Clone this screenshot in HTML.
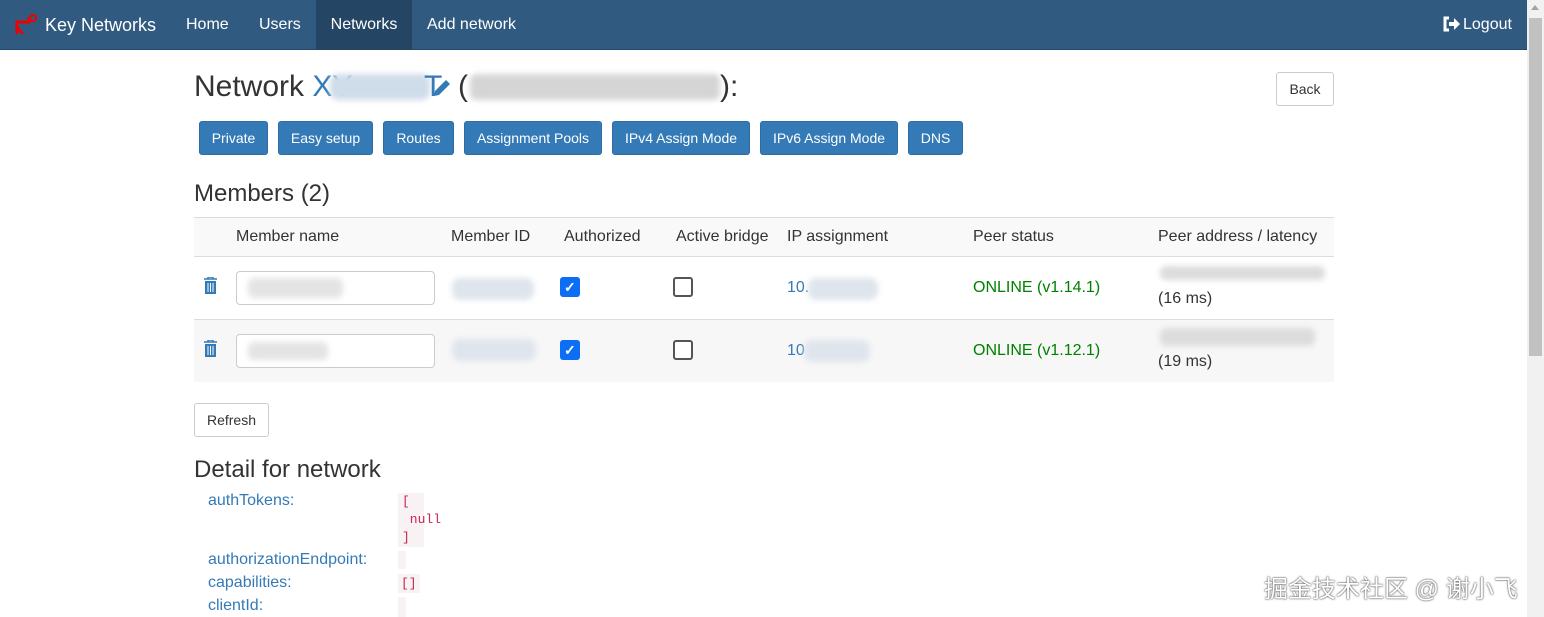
<!DOCTYPE html>
<html><head><meta charset="utf-8"><style>
*{box-sizing:border-box}
body{margin:0;width:1544px;height:617px;overflow:hidden;font-family:"Liberation Sans",Arial,sans-serif;font-size:14px;color:#333;background:#fff;position:relative}
.nav{position:absolute;left:0;top:0;width:1527px;height:50px;background:#305a80;border-bottom:1px solid #244a6b}
.nav a{position:absolute;top:0;height:50px;line-height:50px;color:#fff;font-size:16px;text-decoration:none}
.sb{position:absolute;right:0;top:0;width:17px;height:617px;background:#f1f1f1}
.sb .th{position:absolute;left:2px;top:18px;width:13px;height:338px;background:#c1c1c1}
.sb .ar{position:absolute;left:4px;top:5px;border:4px solid transparent;border-bottom:5px solid #a3a3a3;border-top:0}
.btnp{position:absolute;top:121px;height:34px;line-height:32px;background:#337ab7;border:1px solid #2e6da4;border-radius:3px;color:#fff;font-size:14px;text-align:center}
.btnd{position:absolute;height:34px;line-height:32px;background:#fff;border:1px solid #ccc;border-radius:3px;color:#333;font-size:14px;text-align:center}
.h{position:absolute;font-size:24px;color:#333}
.t{position:absolute;font-size:16px}
.blur{position:absolute;background:#dfe5ec;border-radius:8px;filter:blur(3px)}
.blurg{position:absolute;background:#dcdcdc;border-radius:6px;filter:blur(3px)}
.inp{position:absolute;left:236px;width:199px;height:34px;border:1px solid #ccc;border-radius:4px;background:#fff}
.cb{position:absolute;width:20px;height:20px;border-radius:3px}
.cb.on{background:#0b6ef5}
.cb.off{border:2px solid #555;background:#fff}
.k{position:absolute;left:208px;font-size:16px;color:#337ab7}
.v{position:absolute;left:398px;font-family:"Liberation Mono",monospace;font-size:13px;color:#c7254e;background:#f9f2f4}
</style></head><body>
<div class="nav">
<svg style="position:absolute;left:14px;top:14px" width="26" height="22" viewBox="0 0 26 22"><path d="M3 20V8h12V3" stroke="#e00" stroke-width="3" fill="none"/><circle cx="19" cy="4" r="3" stroke="#e00" stroke-width="2" fill="none"/><path d="M4 14l5 6" stroke="#e00" stroke-width="2.5"/></svg>
<a style="left:45px;font-size:18px">Key Networks</a>
<a style="left:186px">Home</a>
<a style="left:259px">Users</a>
<a style="left:316px;width:96px;background:#244664;text-align:center">Networks</a>
<a style="left:427px">Add network</a>
<svg style="position:absolute;left:1442px;top:16px" width="18" height="16" viewBox="0 0 18 16"><path d="M7 2H3v12h4" stroke="#fff" stroke-width="3" fill="none"/><path d="M7 6h5V2l6 6-6 6v-4H7z" fill="#fff"/></svg>
<a style="left:1463px">Logout</a>
</div>
<div class="sb"><div class="ar"></div><div class="th"></div></div>
<div class="h" style="left:194px;top:70px;font-size:30px">Network <span style="color:#337ab7">XY</span></div>
<div class="blur" style="left:330px;top:74px;width:100px;height:26px;background:#cfdce9"></div>
<div class="h" style="left:424px;top:70px;font-size:30px;color:#337ab7">T</div>
<svg style="position:absolute;left:432px;top:78px" width="20" height="20" viewBox="0 0 20 20"><path d="M2 18l1-5L14 2l4 4L7 17z" fill="#337ab7"/></svg>
<div class="h" style="left:458px;top:70px;font-size:30px">(</div>
<div class="blurg" style="left:470px;top:74px;width:250px;height:26px;background:#d5d5d5"></div>
<div class="h" style="left:720px;top:70px;font-size:30px">):</div>
<div class="btnd" style="left:1276px;top:72px;width:58px">Back</div>
<div class="btnp" style="left:199px;width:69px">Private</div>
<div class="btnp" style="left:278px;width:95px">Easy setup</div>
<div class="btnp" style="left:383px;width:71px">Routes</div>
<div class="btnp" style="left:464px;width:138px">Assignment Pools</div>
<div class="btnp" style="left:612px;width:138px">IPv4 Assign Mode</div>
<div class="btnp" style="left:760px;width:138px">IPv6 Assign Mode</div>
<div class="btnp" style="left:908px;width:55px">DNS</div>
<div class="h" style="left:194px;top:180px">Members (2)</div>
<div style="position:absolute;left:194px;top:217px;width:1140px;height:40px;background:#f9f9f9;border-top:1px solid #ddd;border-bottom:1px solid #ddd"></div>
<div style="position:absolute;left:194px;top:319px;width:1140px;height:63px;background:#f7f7f7;border-top:1px solid #ddd"></div>
<div class="t" style="left:236px;top:228px">Member name</div>
<div class="t" style="left:451px;top:228px">Member ID</div>
<div class="t" style="left:564px;top:228px">Authorized</div>
<div class="t" style="left:676px;top:228px">Active bridge</div>
<div class="t" style="left:787px;top:228px">IP assignment</div>
<div class="t" style="left:973px;top:228px">Peer status</div>
<div class="t" style="left:1158px;top:228px">Peer address / latency</div>
<svg style="position:absolute;left:203px;top:277px" width="15" height="17" viewBox="0 0 15 17"><path d="M1 2h13M5 2V0h5v2" stroke="#337ab7" stroke-width="1.5" fill="none"/><path d="M2 4h11v13H2z" fill="#337ab7"/><path d="M5 6v9M7.5 6v9M10 6v9" stroke="#fff" stroke-width="1"/></svg>
<svg style="position:absolute;left:203px;top:340px" width="15" height="17" viewBox="0 0 15 17"><path d="M1 2h13M5 2V0h5v2" stroke="#337ab7" stroke-width="1.5" fill="none"/><path d="M2 4h11v13H2z" fill="#337ab7"/><path d="M5 6v9M7.5 6v9M10 6v9" stroke="#fff" stroke-width="1"/></svg>
<div class="inp" style="top:271px"></div><div class="inp" style="top:334px"></div>
<div class="blurg" style="left:248px;top:278px;width:95px;height:20px;background:#e4e4e4"></div>
<div class="blurg" style="left:248px;top:342px;width:80px;height:18px;background:#e4e4e4"></div>
<div class="blur" style="left:452px;top:278px;width:82px;height:22px"></div>
<div class="blur" style="left:452px;top:339px;width:84px;height:22px"></div>
<div class="cb on" style="left:560px;top:277px"></div><div class="cb on" style="left:560px;top:340px"></div>
<div style="position:absolute;left:564px;top:279px;color:#fff;font-size:14px;font-weight:bold">✓</div>
<div style="position:absolute;left:564px;top:342px;color:#fff;font-size:14px;font-weight:bold">✓</div>
<div class="cb off" style="left:673px;top:277px"></div><div class="cb off" style="left:673px;top:340px"></div>
<div class="t" style="left:787px;top:279px;color:#337ab7">10.</div>
<div class="blur" style="left:808px;top:278px;width:70px;height:22px"></div>
<div class="t" style="left:787px;top:342px;color:#337ab7">10</div>
<div class="blur" style="left:804px;top:340px;width:66px;height:22px"></div>
<div class="t" style="left:973px;top:279px;color:#008000">ONLINE (v1.14.1)</div>
<div class="t" style="left:973px;top:342px;color:#008000">ONLINE (v1.12.1)</div>
<div class="blurg" style="left:1160px;top:266px;width:165px;height:14px"></div>
<div class="t" style="left:1158px;top:290px">(16 ms)</div>
<div class="blurg" style="left:1160px;top:328px;width:155px;height:18px"></div>
<div class="t" style="left:1158px;top:353px">(19 ms)</div>
<div class="btnd" style="left:194px;top:403px;width:75px">Refresh</div>
<div class="h" style="left:194px;top:456px">Detail for network</div>
<div class="k" style="top:492px">authTokens:</div>
<div class="v" style="top:493px;width:26px;height:54px;line-height:18px;padding-left:4px">[<br>&nbsp;null<br>]</div>
<div class="k" style="top:551px">authorizationEndpoint:</div>
<div class="v" style="top:551px;width:8px;height:18px"></div>
<div class="k" style="top:574px">capabilities:</div>
<div class="v" style="top:574px;width:22px;height:19px;padding-left:3px;line-height:19px">[]</div>
<div class="k" style="top:597px">clientId:</div>
<div class="v" style="top:597px;width:8px;height:20px"></div>
<div style="position:absolute;left:1264px;top:569px;font-family:'Liberation Sans','Noto Sans CJK SC',sans-serif;font-size:24px;color:#fff;text-shadow:0 0 2px #555,0 0 1px #333">掘金技术社区 @ 谢小飞</div>
</body></html>
